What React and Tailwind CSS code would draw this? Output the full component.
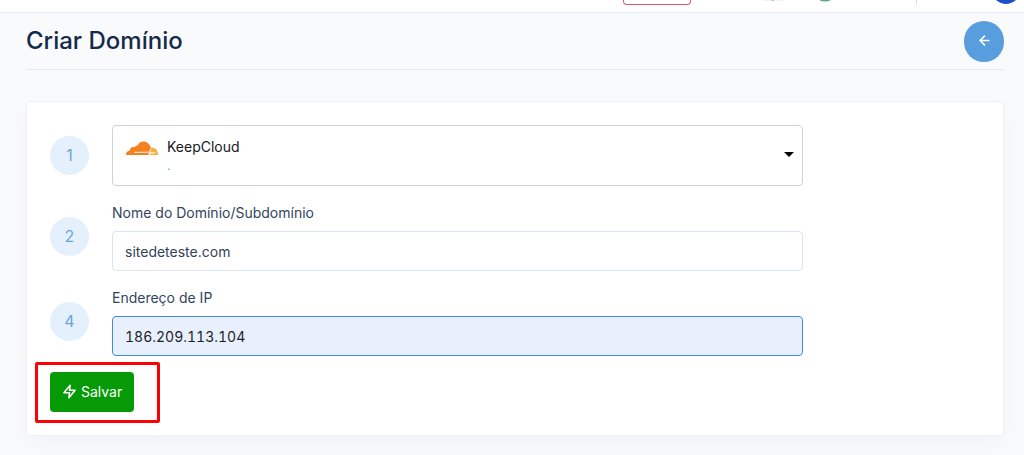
import { useState } from "react";
import { ArrowLeft } from "lucide-react";

function Step({ number, children }) {
  return (
    <div className="flex items-center gap-[23px]">
      <span className="flex size-[39px] shrink-0 items-center justify-center rounded-full bg-[#e5f0fd] pb-0.5 text-base text-[#69a5dc]">
        {number}
      </span>
      <div className="w-full max-w-[691px]">{children}</div>
    </div>
  );
}

function TextField({ id, label, value, onChange, active }) {
  return (
    <>
      <label htmlFor={id} className="mb-2 block text-[14px] leading-[21px] text-[#33445f]">
        {label}
      </label>
      <input
        id={id}
        type="text"
        value={value}
        onChange={(e) => onChange(e.target.value)}
        className={
          active
            ? "block h-10 w-full rounded-[4px] border border-[#3f8ae6] bg-[#e8effd] px-3 text-[14px] tabular-nums text-[#1c1f26] outline-none"
            : "block h-10 w-full rounded-[4px] border border-[#dbe4f1] bg-white px-3 text-[14px] text-[#33415a] outline-none"
        }
      />
    </>
  );
}

function BoltIcon() {
  return (
    <svg
      viewBox="0 0 24 24"
      className="size-[15px]"
      fill="none"
      stroke="currentColor"
      strokeWidth="2.500"
      strokeLinecap="round"
      strokeLinejoin="round"
      aria-hidden="true"
    >
      <polygon points="13 2 3 14 12 14 11 22 21 10 12 10 13 2" />
    </svg>
  );
}

function CloudLogo() {
  return (
    <svg viewBox="0 0 32 15" className="h-[15px] w-8" aria-hidden="true">
      <path
        fill="#f48120"
        d="M0 14.100C-.1 11.600 1.300 9.700 3.900 9.500C3.700 7 6.100 5.300 8.400 6.400C9.200 5 10.300 4.700 11.300 4.600C12.600 1.900 14.900.4 17.400.4C20.800.4 24 3 24.800 6.500C25.100 8.200 24.500 9 23.800 10.300L22.400 14.100Z"
      />
      <path
        fill="#faad3f"
        d="M24.800 6.600C28.700 6.300 31.700 9 31.900 12.500L31.700 14.100H22.800L23.500 12.400L29 11.900L24.100 11.200Z"
      />
      <path fill="none" stroke="#fff" strokeWidth=".9" d="M8 11.400L22.600 11.200Q24 10.800 24.900 7.500M22.500 14.500L23.400 12.300L29.500 11.800" />
    </svg>
  );
}

export default function App() {
  const [provider, setProvider] = useState("keepcloud");
  const [domain, setDomain] = useState("sitedeteste.com");
  const [ip, setIp] = useState("186.209.113.104");

  return (
    <div className="min-h-screen bg-[#f9fafc] pb-5 font-['Inter','Liberation_Sans',sans-serif]">
      <header className="flex h-[13px] items-start justify-end overflow-hidden border-b border-[#e3ebf6] bg-white pr-[7px]">
        <span className="mr-[72px] h-[5px] w-[68px] rounded-b-[4px] border border-t-0 border-[#e4566e]" />
        <svg viewBox="0 0 20 1" className="mr-[34px] h-px w-5" aria-hidden="true">
          <path fill="#f0f4f9" d="M0 0H20V1H0Z" />
          <path fill="#a9c8e8" d="M8.500 0H11V1H8.500Z" />
        </svg>
        <svg viewBox="0 0 16 2" className="mr-[83px] h-[2px] w-4" aria-hidden="true">
          <path fill="#5ca68c" d="M2 0H14Q8 3 2 0Z" />
        </svg>
        <span className="mr-[78px] h-[5px] w-px bg-[#dcdfe4]" />
        <svg viewBox="0 0 22 4" className="h-1 w-[22px]" aria-hidden="true">
          <path fill="#1d4fc9" d="M1 0H21Q11 8 1 0Z" />
        </svg>
      </header>

      <main className="pr-5 pl-[26px]">
        <div className="flex h-[57px] items-center justify-between border-b border-[#e2e8f4]">
          <h1 className="text-2xl font-medium text-[#152a4a]">Criar Domínio</h1>
          <button
            type="button"
            aria-label="Voltar"
            className="flex h-[41px] w-10 items-center justify-center rounded-full bg-[#589ddd] pb-0.5 text-white"
          >
            <ArrowLeft size={15} strokeWidth={2.5} />
          </button>
        </div>

        <form
          onSubmit={(e) => e.preventDefault()}
          className="mt-[31px] flex flex-col gap-4 rounded-[4px] border border-[#edf1f8] bg-white p-[23px] shadow-[0_8px_20px_rgba(18,38,63,0.03)]"
        >
          <Step number="1">
            <div className="relative">
              <select
                aria-label="Provedor"
                value={provider}
                onChange={(e) => setProvider(e.target.value)}
                className="block h-[61px] w-full appearance-none rounded-[4px] border border-[#d0d2d4] bg-white pr-10 pb-[18px] pl-[54px] text-[14px] text-[#15181e] outline-none"
              >
                <option value="keepcloud">KeepCloud</option>
              </select>
              <span className="pointer-events-none absolute top-4 left-[14px]">
                <CloudLogo />
              </span>
              <span className="pointer-events-none absolute top-[33px] left-[55px] text-xs leading-4 text-[#589ddd]">.</span>
              <span className="pointer-events-none absolute top-[27px] right-[9px] border-x-[5px] border-t-[5px] border-x-transparent border-t-black" />
            </div>
          </Step>
          <Step number="2">
            <TextField id="domain" label="Nome do Domínio/Subdomínio" value={domain} onChange={setDomain} />
          </Step>
          <Step number="4">
            <TextField id="ip" label="Endereço de IP" value={ip} onChange={setIp} active />
          </Step>
          <div className="relative self-start">
            <button
              type="submit"
              className="flex h-10 items-center gap-1 rounded-[4px] bg-[#069b06] px-3 pb-0.5 text-[14px] text-white"
            >
              <BoltIcon />
              Salvar
            </button>
            <span className="pointer-events-none absolute -top-[10px] -right-[26px] -bottom-[11px] -left-[15px] rounded-[2px] border-[3px] border-[#fb0207]" />
          </div>
        </form>
      </main>
    </div>
  );
}
